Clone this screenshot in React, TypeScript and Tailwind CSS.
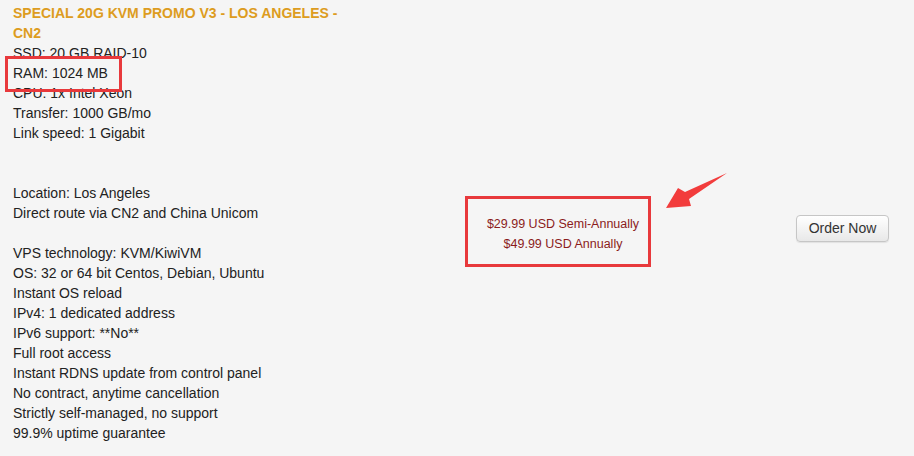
import React from "react";

const specs = [
  "SSD: 20 GB RAID-10",
  "RAM: 1024 MB",
  "CPU: 1x Intel Xeon",
  "Transfer: 1000 GB/mo",
  "Link speed: 1 Gigabit",
  "",
  "",
  "Location: Los Angeles",
  "Direct route via CN2 and China Unicom",
  "",
  "VPS technology: KVM/KiwiVM",
  "OS: 32 or 64 bit Centos, Debian, Ubuntu",
  "Instant OS reload",
  "IPv4: 1 dedicated address",
  "IPv6 support: **No**",
  "Full root access",
  "Instant RDNS update from control panel",
  "No contract, anytime cancellation",
  "Strictly self-managed, no support",
  "99.9% uptime guarantee",
];

export default function App() {
  return (
    <div
      className="relative w-[914px] h-[456px] overflow-hidden bg-[#f5f5f5] text-[#222] text-[14px] leading-[20px]"
      style={{ fontFamily: '"Liberation Sans", Arial, sans-serif' }}
    >
      <div className="flex items-center h-full">
        {/* description */}
        <div className="w-[453px] pl-[13px] pt-[3px] self-start">
          <div className="w-[340px] font-bold text-[#dd9c20]">
            SPECIAL 20G KVM PROMO V3 - LOS ANGELES - CN2
          </div>
          {specs.map((s, i) => (
            <div key={i} className="h-[20px] whitespace-nowrap">
              {s}
            </div>
          ))}
        </div>

        {/* pricing */}
        <div className="w-[220px] text-center text-[12.5px] leading-[20px] text-[#8b1c1c] pt-[12px]">
          <div>$29.99 USD Semi-Annually</div>
          <div>$49.99 USD Annually</div>
        </div>

        {/* order */}
        <div className="flex-1 flex justify-end pr-[25px]">
          <button className="w-[93px] h-[27px] rounded-[4px] border border-[#c6c6c6] bg-gradient-to-b from-white to-[#e8e8e8] text-[14px] text-[#333] shadow-[0_1px_1px_rgba(0,0,0,0.08)]">
            Order Now
          </button>
        </div>
      </div>

      {/* annotations */}
      <div className="absolute left-[5px] top-[56px] w-[117px] h-[36px] border-[3px] border-[#e8393c]" />
      <div className="absolute left-[465px] top-[196px] w-[186px] h-[71px] border-[3px] border-[#e8393c]" />
      <svg className="absolute left-0 top-0" width="914" height="456">
        <polygon
          points="666,208 678,188 685,192 727,173 689,199 691,206"
          fill="#f23c3c"
        />
      </svg>
    </div>
  );
}
